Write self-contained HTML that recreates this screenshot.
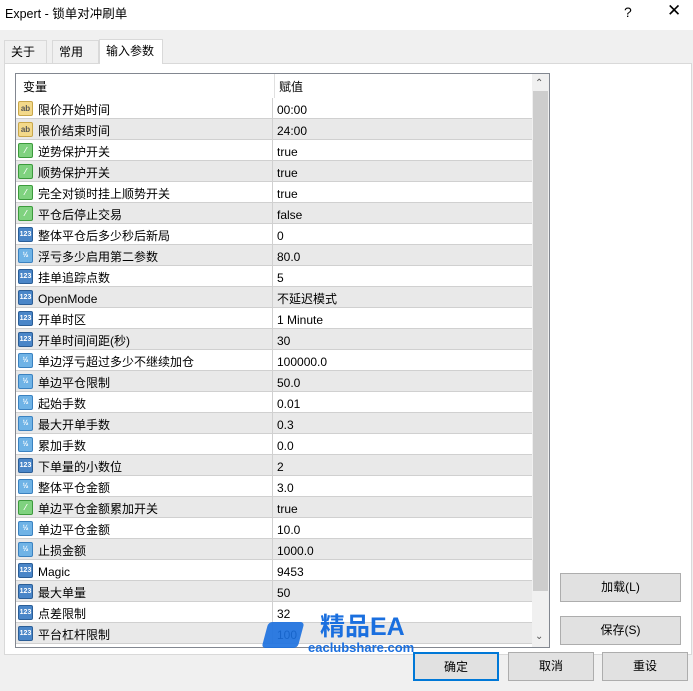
<!DOCTYPE html><html><head><meta charset="utf-8"><style>
*{margin:0;padding:0;box-sizing:border-box}
body{width:693px;height:691px;background:#f0f0f0;font-family:"Liberation Sans","Noto Sans CJK SC",sans-serif;font-size:12px;line-height:15px;color:#000;position:relative;overflow:hidden}
.title{position:absolute;left:0;top:0;width:693px;height:30px;background:#fff;}
.title span{position:absolute;left:5px;top:7px;font-size:12.5px}
.tab{position:absolute;top:40px;height:23px;border:1px solid #d9d9d9;border-bottom:none;background:#f0f0f0;padding:4px 0 0 6px}
.panel{position:absolute;left:4px;top:63px;width:688px;height:592px;background:#fff;border:1px solid #d9d9d9}
.list{position:absolute;left:15px;top:73px;width:535px;height:575px;border:1px solid #828790;background:#fff;overflow:hidden}
.row{position:absolute;left:0;width:516px;height:21px;border-bottom:1px solid #d0d0d0}
.row.g{background:#e9e9e9}
.row .n{position:absolute;left:22px;top:2px;height:20px;line-height:20px}
.row .v{position:absolute;left:261px;top:2px;height:20px;line-height:20px}
.row .d{position:absolute;left:256px;top:0;width:1px;height:21px;background:#d0d0d0}
.ic{position:absolute;left:2px;top:3px;width:15px;height:15px;border-radius:2px;font-size:8px;line-height:13px;text-align:center;font-weight:bold}
.ab{background:#f3d98a;border:1px solid #c9a74a;color:#555}
.bo{background:#7fd27f;border:1px solid #3c9a3c;color:#fff}
.in{background:#4a86c8;border:1px solid #2b5e97;color:#fff;font-size:7px}
.db{background:#6fb3e6;border:1px solid #3b82c0;color:#fff;font-size:7px}
.btn{position:absolute;height:29px;background:#e1e1e1;border:1px solid #adadad;text-align:center;line-height:27px}
</style></head><body>
<div class="title"><span>Expert - 锁单对冲刷单</span><span style="left:624px;top:5px;font-size:14px">?</span><span style="left:667px;top:3px;font-size:17px">✕</span></div>
<div class="tab" style="left:4px;width:43px">关于</div>
<div class="tab" style="left:52px;width:47px">常用</div>
<div class="tab" style="left:99px;width:64px;top:39px;height:25px;background:#fff;z-index:2">输入参数</div>
<div class="panel"></div>
<div class="list">
<div style="position:absolute;left:0;top:0;width:516px;height:24px;background:#fff"><span style="position:absolute;left:7px;top:6px">变量</span><span style="position:absolute;left:258px;top:0;width:1px;height:24px;background:#e0e0e0"></span><span style="position:absolute;left:263px;top:6px">赋值</span></div>
<div id="rows"></div>
<div style="position:absolute;left:516px;top:0;width:17px;height:573px;background:#f0f0f0"></div>
<div style="position:absolute;left:517px;top:17px;width:15px;height:500px;background:#cdcdcd"></div>
<div style="position:absolute;left:519px;top:2px;font-size:10px;color:#555">⌃</div>
<div style="position:absolute;left:519px;top:555px;font-size:10px;color:#555">⌄</div>
</div>
<div class="btn" style="left:560px;top:573px;width:121px">加载(L)</div>
<div class="btn" style="left:560px;top:616px;width:121px">保存(S)</div>
<div class="btn" style="left:413px;top:652px;width:86px;border:2px solid #0078d7">确定</div>
<div class="btn" style="left:508px;top:652px;width:86px">取消</div>
<div class="btn" style="left:602px;top:652px;width:86px">重设</div>
<div style="position:absolute;left:265px;top:622px;width:36px;height:26px;background:#1a6fdf;opacity:.9;border-radius:4px;transform:skewX(-15deg)"></div>
<div style="position:absolute;left:320px;top:612px;font-size:25px;line-height:30px;font-weight:bold;color:#1a6fdf">精品EA</div>
<div style="position:absolute;left:308px;top:640px;font-size:13px;font-weight:bold;color:#1a6fdf">eaclubshare.com</div>
<script>
var d=[["ab","限价开始时间","00:00"],["ab","限价结束时间","24:00"],["bo","逆势保护开关","true"],["bo","顺势保护开关","true"],["bo","完全对锁时挂上顺势开关","true"],["bo","平仓后停止交易","false"],["in","整体平仓后多少秒后新局","0"],["db","浮亏多少启用第二参数","80.0"],["in","挂单追踪点数","5"],["in","OpenMode","不延迟模式"],["in","开单时区","1 Minute"],["in","开单时间间距(秒)","30"],["db","单边浮亏超过多少不继续加仓","100000.0"],["db","单边平仓限制","50.0"],["db","起始手数","0.01"],["db","最大开单手数","0.3"],["db","累加手数","0.0"],["in","下单量的小数位","2"],["db","整体平仓金额","3.0"],["bo","单边平仓金额累加开关","true"],["db","单边平仓金额","10.0"],["db","止损金额","1000.0"],["in","Magic","9453"],["in","最大单量","50"],["in","点差限制","32"],["in","平台杠杆限制","100"]];
var t={ab:"ab",bo:"⁄",in:"123",db:"½"},h="";
d.forEach(function(r,i){h+='<div class="row'+(i%2?' g':'')+'" style="top:'+(24+i*21)+'px"><span class="ic '+r[0]+'">'+t[r[0]]+'</span><span class="n">'+r[1]+'</span><span class="d"></span><span class="v">'+r[2]+'</span></div>'});
document.getElementById("rows").innerHTML=h;
</script>
</body></html>
